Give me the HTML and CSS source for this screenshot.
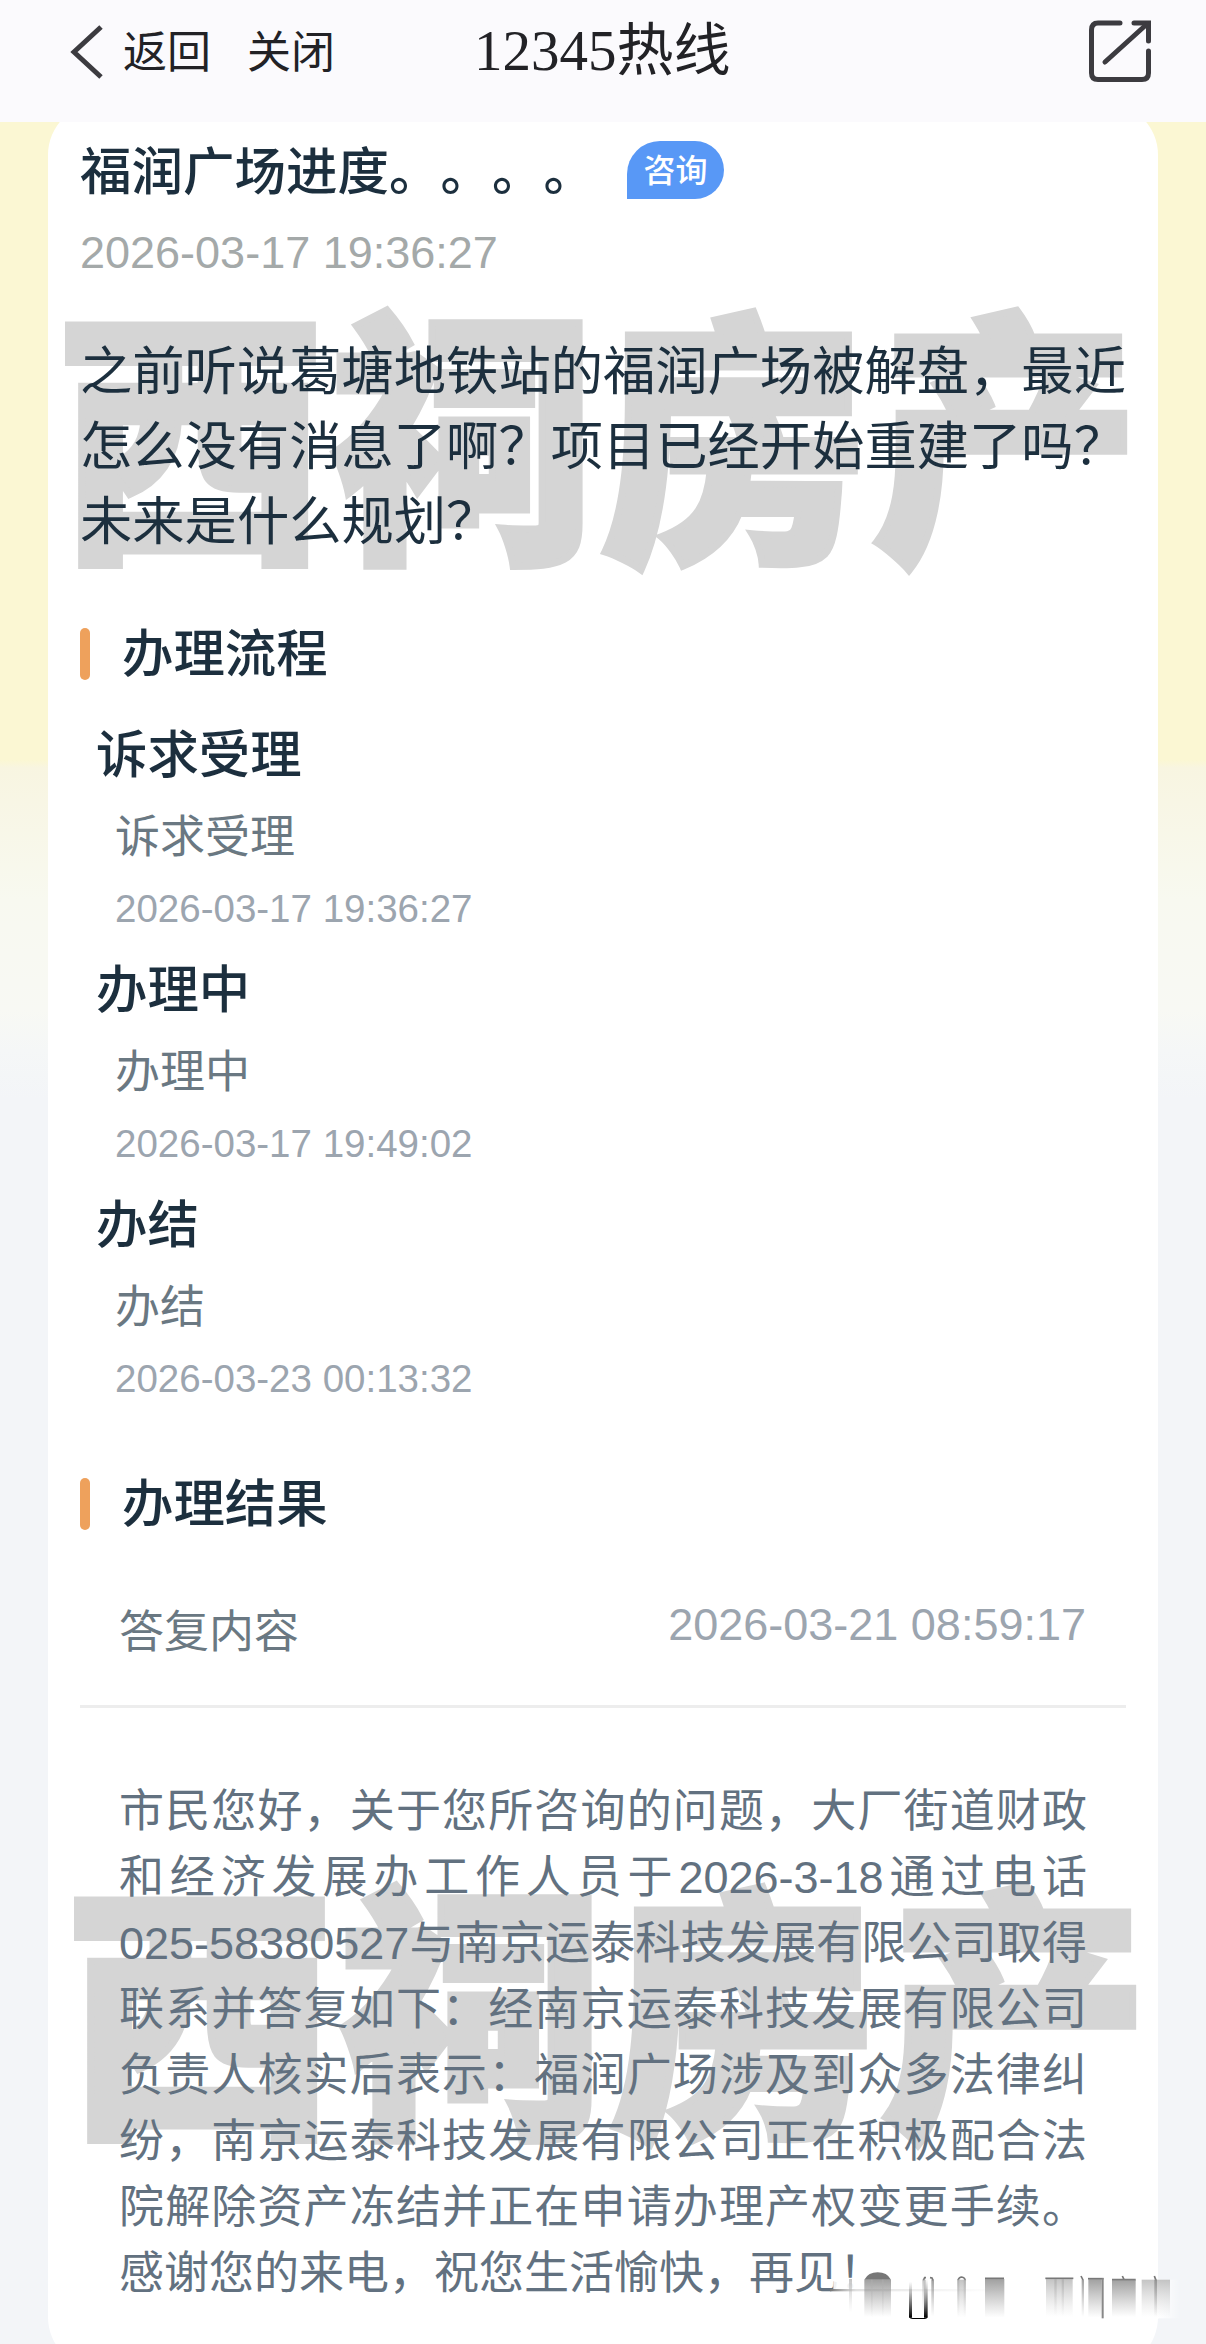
FILE: index.html
```html
<!DOCTYPE html>
<html lang="zh-CN">

<head>
    <meta charset="UTF-8">
    <meta name="viewport" content="width=device-width, initial-scale=1.0">
    <title>12345热线</title>
    <link rel="stylesheet" href="styles.css">
</head>

<body>

    <header class="nav-bar">
        <div class="nav-left">
            <svg class="back-icon" viewBox="0 0 34 54">
                <path d="M31 2 L4 27 L31 52" />
            </svg>
            <span class="nav-link">返回</span>
            <span class="nav-link">关闭</span>
        </div>
        <h1 class="nav-title">12345热线</h1>
        <svg class="share-icon" viewBox="0 0 62 62">
            <path d="M31 3 H9 Q2.5 3 2.5 10 V53 Q2.5 59.5 9 59.5 H53 Q59.500 59.5 59.500 53 V31" />
            <path d="M45 3 H59.500 V21" />
            <path d="M58 4 L16 42" />
        </svg>
    </header>

    <main class="card">
        <div class="title-row">
            <h2 class="title">福润广场进度。。。。</h2>
            <span class="badge">咨询</span>
        </div>
        <p class="create-time">2026-03-17 19:36:27</p>

        <div class="question">
            <div class="watermark" aria-hidden="true">西祠房产</div>
            <p class="question-text">之前听说葛塘地铁站的福润广场被解盘，最近怎么没有消息了啊？项目已经开始重建了吗？未来是什么规划？</p>
        </div>

        <h3 class="section-title">办理流程</h3>
        <ul class="steps">
            <li class="step">
                <p class="step-name">诉求受理</p>
                <p class="step-desc">诉求受理</p>
                <p class="step-time">2026-03-17 19:36:27</p>
            </li>
            <li class="step">
                <p class="step-name">办理中</p>
                <p class="step-desc">办理中</p>
                <p class="step-time">2026-03-17 19:49:02</p>
            </li>
            <li class="step">
                <p class="step-name">办结</p>
                <p class="step-desc">办结</p>
                <p class="step-time">2026-03-23 00:13:32</p>
            </li>
        </ul>

        <h3 class="section-title result-title">办理结果</h3>
        <div class="reply-head">
            <span class="reply-label">答复内容</span>
            <span class="reply-time">2026-03-21 08:59:17</span>
        </div>
        <div class="reply">
            <div class="watermark watermark-reply" aria-hidden="true">西祠房产</div>
            <p class="reply-text">市民您好，关于您所咨询的问题，大厂街道财政和经济发展办工作人员于2026-3-18通过电话025-58380527与南京运泰科技发展有限公司取得联系并答复如下：经南京运泰科技发展有限公司负责人核实后表示：福润广场涉及到众多法律纠纷，南京运泰科技发展有限公司正在积极配合法院解除资产冻结并正在申请办理产权变更手续。感谢您的来电，祝您生活愉快，再见！</p>
        </div>
    </main>

    <!-- faded strip in the bottom corner -->
    <svg class="smear" viewBox="90 80 1050 150">
        <defs>
            <linearGradient id="fade" x1="0" y1="0" x2="0" y2="1">
                <stop offset="0" stop-color="#888" stop-opacity=".8" />
                <stop offset="1" stop-color="#999" stop-opacity="0" />
            </linearGradient>
            <linearGradient id="fade-light" x1="0" y1="0" x2="0" y2="1">
                <stop offset="0" stop-color="#aaa" stop-opacity=".7" />
                <stop offset="1" stop-color="#ccc" stop-opacity="0" />
            </linearGradient>
            <linearGradient id="ink" x1="0" y1="0" x2="0" y2="1">
                <stop offset="0" stop-color="#333" stop-opacity="0" />
                <stop offset="1" stop-color="#000" />
            </linearGradient>
            <linearGradient id="side" x1="0" y1="0" x2="1" y2="0">
                <stop offset="0" stop-color="#777" />
                <stop offset=".15" stop-color="#ccc" stop-opacity=".6" />
                <stop offset="1" stop-color="#ddd" stop-opacity="0" />
            </linearGradient>
            <linearGradient id="cover" x1="0" y1="0" x2="0" y2="1">
                <stop offset="0" stop-color="#fff" stop-opacity="0" />
                <stop offset=".08" stop-color="#fff" stop-opacity=".9" />
                <stop offset="1" stop-color="#fff" />
            </linearGradient>
            <linearGradient id="cover-edge" x1="0" y1="0" x2="1" y2="0">
                <stop offset="0" stop-color="#fff" />
                <stop offset="1" stop-color="#fff" stop-opacity="0" />
            </linearGradient>
        </defs>
        <rect x="100" y="100" width="975" height="124" fill="url(#cover)" />
        <rect x="1074" y="106" width="66" height="116" fill="url(#cover-edge)" />
        <rect x="90" y="134" width="520" height="7" fill="url(#side)" />
        <rect x="147" y="104" width="9" height="100" fill="url(#fade-light)" />
        <path d="M193 106 Q205 84 233 84 Q261 84 273 106 Z" fill="#777" />
        <rect x="193" y="106" width="80" height="112" fill="url(#fade)" />
        <rect x="213" y="106" width="5" height="112" fill="url(#fade-light)" />
        <rect x="246" y="106" width="5" height="112" fill="url(#fade-light)" />
        <rect x="327" y="112" width="9" height="108" fill="url(#ink)" />
        <rect x="372" y="104" width="11" height="116" fill="url(#ink)" />
        <path d="M327 217 Q330 224 338 224 H374 Q381 224 383 217 L372 221 H338 Z" fill="#000" />
        <path d="M370 108 L374 100 H378 M390 100 L396 101 L399 108" class="cap" />
        <rect x="367" y="106" width="10" height="100" fill="url(#fade-light)" />
        <rect x="394" y="106" width="8" height="110" fill="url(#fade)" />
        <path d="M474 108 Q477 98 485 98 Q494 99 496 108" class="cap" />
        <rect x="472" y="106" width="26" height="114" fill="url(#fade-light)" />
        <rect x="472" y="106" width="6" height="112" fill="url(#fade-light)" />
        <rect x="491" y="106" width="6" height="112" fill="url(#fade-light)" />
        <path d="M555 102 H612" class="cap" />
        <rect x="555" y="104" width="58" height="116" fill="url(#fade)" />
        <path d="M736 102 H820" class="cap" />
        <rect x="738" y="104" width="80" height="114" fill="url(#fade-light)" />
        <rect x="763" y="104" width="7" height="112" fill="url(#fade-light)" />
        <rect x="785" y="104" width="7" height="112" fill="url(#fade-light)" />
        <path d="M843 95 L849 107" class="cap" />
        <rect x="845" y="106" width="7" height="112" fill="url(#fade)" />
        <path d="M864 103 H911" class="cap" />
        <rect x="865" y="104" width="40" height="116" fill="url(#fade)" />
        <rect x="905" y="102" width="6" height="120" fill="#888" />
        <path d="M936 106 H1007 M967 95 L972 105" class="cap" />
        <rect x="936" y="106" width="71" height="112" fill="url(#fade)" />
        <path d="M1063 95 L1068 108" class="cap" />
        <rect x="1025" y="106" width="85" height="112" fill="url(#fade-light)" />
        <rect x="1063" y="106" width="8" height="112" fill="url(#fade)" />
    </svg>

</body>

</html>
```

FILE: styles.css
```css
* {
    box-sizing: border-box;
    margin: 0;
    padding: 0;
}

body {
    position: relative;
    width: 1206px;
    height: 2344px;
    overflow: hidden;
    font-family: "Liberation Sans", "Noto Sans CJK SC", sans-serif;
    text-spacing-trim: space-all;
    background: linear-gradient(to bottom, #fbf7d3 0, #fbf7d3 760px, #f8f5e1 768px, #f8f9f0 900px, #f8f9f4 1010px, #f5f7f7 1050px, #f3f5f8 1100px, #f3f5f8 100%);
}

.nav-bar {
    position: relative;
    z-index: 1;
    display: flex;
    align-items: flex-start;
    justify-content: space-between;
    height: 122px;
    padding: 0 55px 0 70px;
    background-color: #fbfafd;
    color: #222226;
}

.nav-left {
    display: flex;
    align-items: center;
    width: 404px;
    height: 104px;
}

.back-icon {
    width: 34px;
    height: 54px;
    margin-right: 19px;
    fill: none;
    stroke: #3c3b40;
    stroke-width: 5;
}

.nav-link {
    margin-right: 36px;
    padding-bottom: 6px;
    font-size: 44px;
}

.nav-title {
    flex: 1;
    font-family: "Liberation Serif", "Noto Sans CJK SC", serif;
    font-size: 57px;
    font-weight: normal;
    line-height: 102px;
}

.share-icon {
    width: 62px;
    height: 62px;
    margin-top: 20px;
    fill: none;
    stroke: #3c3b40;
    stroke-width: 5;
    stroke-linecap: round;
}

.card {
    height: 2266px;
    margin: -19px 48px 0;
    padding: 34px 32px 0;
    border-radius: 52px;
    background-color: #fff;
    color: #1c2f3e;
}

.title-row {
    display: flex;
    align-items: flex-start;
    height: 72px;
}

.title {
    font-size: 51.5px;
    font-weight: 500;
    line-height: 71px;
}

.badge {
    width: 97px;
    height: 58px;
    margin: 4px 0 0 32px;
    border-radius: 33px 29px 29px 0;
    background-color: #5898f6;
    color: #fff;
    font-size: 32px;
    font-weight: 500;
    line-height: 60px;
    text-align: center;
}

.create-time {
    margin-top: 19px;
    font-size: 45px;
    line-height: 50px;
    color: #a4a9a9;
}

.question,
.reply {
    position: relative;
}

.question {
    margin-top: 57px;
}

/* big grey mark behind the text */
.watermark {
    position: absolute;
    top: -42px;
    left: -23px;
    font-size: 268px;
    font-weight: 900;
    line-height: 310px;
    letter-spacing: 3.5px;
    white-space: nowrap;
    color: #d5d5d5;
    -webkit-text-stroke: 7px #d5d5d5;
}

.watermark-reply {
    top: 160px;
    left: -14px;
}

.question-text {
    position: relative;
    width: 1048px;
    font-size: 52.3px;
    line-height: 75px;
}

.section-title {
    display: flex;
    align-items: center;
    height: 52px;
    margin-top: 68px;
    font-size: 51.4px;
    font-weight: 500;
    line-height: 52px;
}

.section-title::before {
    content: "";
    width: 10px;
    height: 52px;
    margin-right: 32px;
    border-radius: 5px;
    background-color: #eea15c;
}

.steps {
    margin-top: 39px;
    padding-left: 16px;
    list-style: none;
}

.step {
    margin-bottom: 22px;
}

.step-name {
    font-size: 51.4px;
    font-weight: 500;
    line-height: 72px;
}

.step-desc {
    margin-top: 17px;
    padding-left: 19px;
    font-size: 45px;
    line-height: 60px;
    color: #6a7882;
}

.step-time {
    margin-top: 18px;
    padding-left: 19px;
    font-size: 38.5px;
    line-height: 46px;
    color: #9ca5af;
}

.result-title {
    margin-top: 76px;
}

.reply-head {
    display: flex;
    justify-content: space-between;
    height: 178px;
    padding: 65px 40px 0 39px;
    border-bottom: 3px solid #ededed;
    line-height: 60px;
    color: #6a7882;
}

.reply-label {
    margin-top: 8px;
    font-size: 45px;
}

.reply-time {
    font-size: 45px;
    color: #9ca5af;
}

.reply-text {
    position: relative;
    width: 968px;
    margin-left: 39px;
    padding-top: 71px;
    font-size: 45px;
    line-height: 66px;
    text-align: justify;
    color: #627180;
}

.smear {
    position: absolute;
    left: 830px;
    top: 2270.7px;
    width: 350px;
    height: 50px;
}

.cap {
    fill: none;
    stroke: #777;
    stroke-width: 5;
}
```
